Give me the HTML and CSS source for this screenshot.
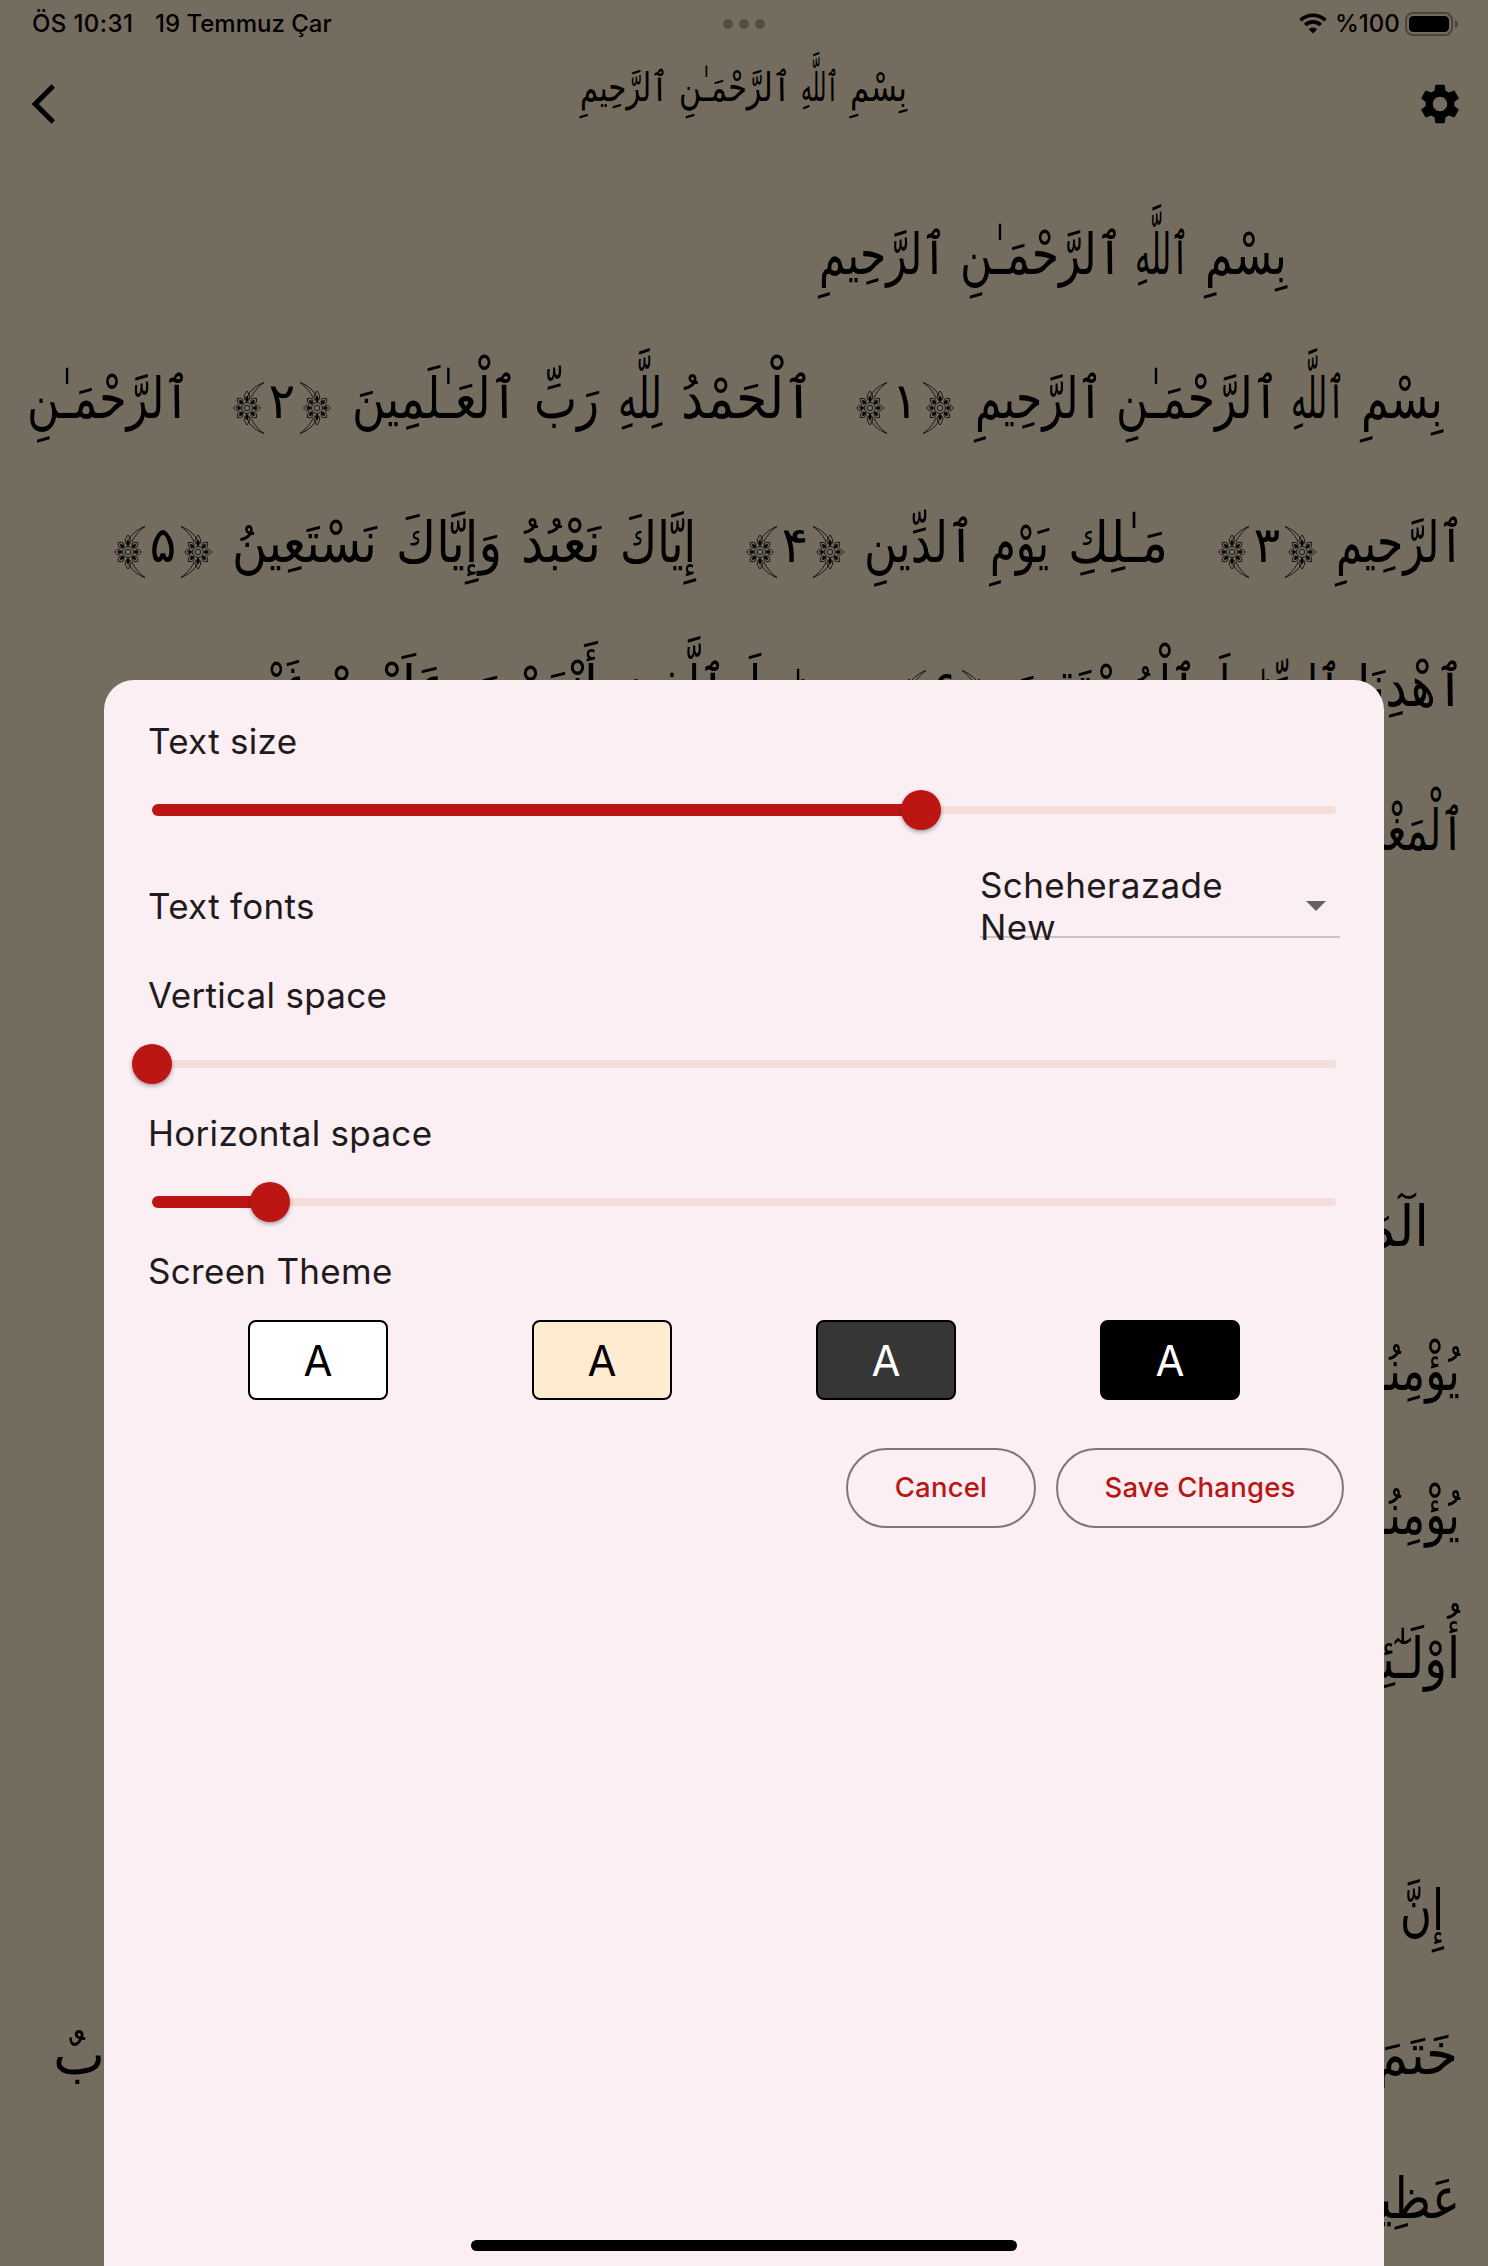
FILE: index.html
```html
<!DOCTYPE html>
<html lang="tr">
<head>
<meta charset="utf-8">
<title>Reader settings</title>
<link rel="stylesheet" href="styles.css">
</head>
<body>
<svg class="defs" width="0" height="0" aria-hidden="true">
  <defs>
    <g id="petal"><path d="M0-6.500 C-4-9.500-3.500-12 0-17 C3.500-12 4-9.500 0-6.500Z"/><path d="M0-6.500 C-1.800-8.500-1.500-10 0-12 C1.500-10 1.800-8.500 0-6.500Z" fill="#000"/></g>
    <g id="side-petal"><path d="M0-6.500 C-4-8.500-3.500-10.500 0-13.500 C3.500-10.500 4-8.500 0-6.500Z"/><path d="M0-6.500 C-1.600-8-1.400-9.500 0-10.500 C1.400-9.500 1.600-8 0-6.500Z" fill="#000"/></g>
    <g id="ornament" fill="none" stroke="#000" stroke-width=".8">
      <path d="M0 .4 C9 4 15 10 16 14 M0 .4 C7 6 11 11 13 16 M0 51.600 C9 48 15 42 16 38 M0 51.600 C7 46 11 41 13 36"/>
      <g transform="translate(17 26)">
        <use href="#petal"/><use href="#petal" transform="rotate(180)"/>
        <use href="#side-petal" transform="rotate(45)"/><use href="#side-petal" transform="rotate(90)"/><use href="#side-petal" transform="rotate(135)"/>
        <use href="#side-petal" transform="rotate(225)"/><use href="#side-petal" transform="rotate(270)"/><use href="#side-petal" transform="rotate(315)"/>
        <circle r="5.500"/><circle r="2.800"/>
      </g>
    </g>
    <g id="brackets"><use href="#ornament" x="67" y="64"/><use href="#ornament" transform="translate(31 64) scale(-1 1)"/></g>
  </defs>
</svg>
<div class="screen">
  <div class="status">
    <span class="time">ÖS 10:31</span><span class="date">19 Temmuz Çar</span>
    <svg class="dots" width="42" height="10"><circle cx="5" cy="5" r="5"/><circle cx="21" cy="5" r="5"/><circle cx="37" cy="5" r="5"/></svg>
    <svg class="wifi" width="28" height="21" viewBox="0 0 28 21"><g fill="none" stroke="#000" stroke-width="3.600"><path d="M1.500 7.300 A18 18 0 0 1 26.500 7.300"/><path d="M6.200 12 A11.300 11.300 0 0 1 21.800 12"/></g><path d="M14 20.500 L9.800 16.200 A6.200 6.200 0 0 1 18.200 16.200Z"/></svg>
    <span class="percent">%100</span>
    <svg class="battery" width="54" height="24" viewBox="0 0 54 24"><rect x="1" y="1" width="46" height="22" rx="7" fill="none" stroke="#4b453c" stroke-width="2"/><rect x="4" y="4" width="40" height="16" rx="4.500"/><path d="M50 8 Q53 9 53 12 Q53 15 50 16Z" fill="#4b453c"/></svg>
  </div>
  <header class="bar">
    <svg width="48" height="48" viewBox="0 0 24 24"><path d="M17.510 3.870 15.730 2.100 5.840 12l9.900 9.900 1.770-1.770L9.380 12z"/></svg>
    <div class="title">
      <svg width="57" height="64"><text y="44" textLength="57" lengthAdjust="spacingAndGlyphs">بِسْمِ</text></svg>
      <svg width="38" height="64"><text y="44" textLength="38" lengthAdjust="spacingAndGlyphs">ٱللَّهِ</text></svg>
      <svg width="111" height="64"><text y="44" textLength="111" lengthAdjust="spacingAndGlyphs">ٱلرَّحْمَـٰنِ</text></svg>
      <svg width="88" height="64"><text y="44" textLength="88" lengthAdjust="spacingAndGlyphs">ٱلرَّحِيمِ</text></svg>
    </div>
    <svg width="48" height="48" viewBox="0 0 24 24"><path d="M19.140 12.940c.04-.3.060-.61.060-.94 0-.32-.02-.64-.07-.94l2.030-1.580c.18-.14.230-.41.120-.61l-1.920-3.320c-.12-.22-.37-.29-.59-.22l-2.390.96c-.5-.38-1.030-.7-1.620-.94l-.36-2.540c-.04-.24-.24-.41-.48-.41h-3.840c-.24 0-.43.170-.47.410l-.36 2.540c-.59.240-1.130.570-1.620.940l-2.390-.96c-.22-.08-.47 0-.59.220L2.740 8.870c-.12.210-.08.470.120.610l2.030 1.580c-.05.3-.09.630-.09.940s.02.640.070.940l-2.030 1.580c-.18.140-.23.410-.12.610l1.920 3.320c.12.220.370.290.590.220l2.390-.96c.5.380 1.030.7 1.620.940l.36 2.540c.05.240.240.410.480.410h3.840c.24 0 .44-.17.470-.41l.36-2.540c.59-.24 1.130-.56 1.620-.94l2.390.96c.22.080.470 0 .59-.22l1.920-3.320c.12-.22.070-.47-.12-.61l-2.010-1.580zM12 15.600c-1.980 0-3.600-1.620-3.600-3.600s1.620-3.600 3.600-3.600 3.600 1.620 3.600 3.600-1.620 3.600-3.600 3.600z"/></svg>
  </header>
  <main class="reader">
    <div class="line opening">
      <div class="phrase tight">
        <svg width="82" height="144"><text y="100" textLength="82" lengthAdjust="spacingAndGlyphs">بِسْمِ</text></svg>
        <svg width="54" height="144"><text y="100" textLength="54" lengthAdjust="spacingAndGlyphs">ٱللَّهِ</text></svg>
        <svg width="159" height="144"><text y="100" textLength="162" lengthAdjust="spacingAndGlyphs">ٱلرَّحْمَـٰنِ</text></svg>
        <svg width="125" height="144"><text y="100" textLength="128" lengthAdjust="spacingAndGlyphs">ٱلرَّحِيمِ</text></svg>
      </div>
    </div>
    <div class="line first">
      <div class="phrase tight">
        <svg width="82" height="144"><text y="100" textLength="82" lengthAdjust="spacingAndGlyphs">بِسْمِ</text></svg>
        <svg width="54" height="144"><text y="100" textLength="54" lengthAdjust="spacingAndGlyphs">ٱللَّهِ</text></svg>
        <svg width="159" height="144"><text y="100" textLength="162" lengthAdjust="spacingAndGlyphs">ٱلرَّحْمَـٰنِ</text></svg>
        <svg width="125" height="144"><text y="100" textLength="128" lengthAdjust="spacingAndGlyphs">ٱلرَّحِيمِ</text></svg>
      </div>
      <svg class="verse" width="98" height="144"><use href="#brackets"/><text class="digit" x="49" y="100">۱</text></svg>
      <div class="phrase">
        <svg width="132" height="144"><text y="100" textLength="132" lengthAdjust="spacingAndGlyphs">ٱلْحَمْدُ</text></svg>
        <svg width="44" height="144"><text y="100" textLength="44" lengthAdjust="spacingAndGlyphs">لِلَّهِ</text></svg>
        <svg width="65" height="144"><text y="100" textLength="65" lengthAdjust="spacingAndGlyphs">رَبِّ</text></svg>
        <svg width="163" height="144"><text y="100" textLength="165" lengthAdjust="spacingAndGlyphs">ٱلْعَـٰلَمِينَ</text></svg>
      </div>
      <svg class="verse" width="98" height="144"><use href="#brackets"/><text class="digit" x="49" y="100">۲</text></svg>
      <svg width="163" height="144"><text y="100" textLength="163" lengthAdjust="spacingAndGlyphs">ٱلرَّحْمَـٰنِ</text></svg>
    </div>
    <div class="line wide">
      <svg width="128" height="144"><text y="100" textLength="128" lengthAdjust="spacingAndGlyphs">ٱلرَّحِيمِ</text></svg>
      <svg class="verse" width="98" height="144"><use href="#brackets"/><text class="digit" x="49" y="100">۳</text></svg>
      <div class="phrase">
        <svg width="100" height="144"><text y="100" textLength="100" lengthAdjust="spacingAndGlyphs">مَـٰلِكِ</text></svg>
        <svg width="59" height="144"><text y="100" textLength="59" lengthAdjust="spacingAndGlyphs">يَوْمِ</text></svg>
        <svg width="107" height="144"><text y="100" textLength="110" lengthAdjust="spacingAndGlyphs">ٱلدِّينِ</text></svg>
      </div>
      <svg class="verse" width="98" height="144"><use href="#brackets"/><text class="digit" x="49" y="100">۴</text></svg>
      <div class="phrase">
        <svg width="76" height="144"><text y="100" textLength="76" lengthAdjust="spacingAndGlyphs">إِيَّاكَ</text></svg>
        <svg width="80" height="144"><text y="100" textLength="80" lengthAdjust="spacingAndGlyphs">نَعْبُدُ</text></svg>
        <svg width="106" height="144"><text y="100" textLength="106" lengthAdjust="spacingAndGlyphs">وَإِيَّاكَ</text></svg>
        <svg width="145" height="144"><text y="100" textLength="145" lengthAdjust="spacingAndGlyphs">نَسْتَعِينُ</text></svg>
      </div>
      <svg class="verse" width="98" height="144"><use href="#brackets"/><text class="digit" x="49" y="100">۵</text></svg>
    </div>
    <div class="line wide">
      <div class="phrase">
        <svg width="107" height="144"><text y="100" textLength="107" lengthAdjust="spacingAndGlyphs">ٱهْدِنَا</text></svg>
        <svg width="125" height="144"><text y="100" textLength="128" lengthAdjust="spacingAndGlyphs">ٱلصِّرَٰطَ</text></svg>
        <svg width="181" height="144"><text y="100" textLength="184" lengthAdjust="spacingAndGlyphs">ٱلْمُسْتَقِيمَ</text></svg>
      </div>
      <svg class="verse" width="98" height="144"><use href="#brackets"/><text class="digit" x="49" y="100">۶</text></svg>
      <div class="phrase">
        <svg width="103" height="144"><text y="100" textLength="103" lengthAdjust="spacingAndGlyphs">صِرَٰطَ</text></svg>
        <svg width="106" height="144"><text y="100" textLength="109" lengthAdjust="spacingAndGlyphs">ٱلَّذِينَ</text></svg>
        <svg width="130" height="144"><text y="100" textLength="130" lengthAdjust="spacingAndGlyphs">أَنْعَمْتَ</text></svg>
        <svg width="124" height="144"><text y="100" textLength="124" lengthAdjust="spacingAndGlyphs">عَلَيْهِمْ</text></svg>
        <svg width="60" height="144"><text y="100" textLength="60" lengthAdjust="spacingAndGlyphs">غَيْرِ</text></svg>
      </div>
    </div>
    <div class="line wide">
      <svg width="168" height="144"><text y="100" textLength="168" lengthAdjust="spacingAndGlyphs">ٱلْمَغْضُوبِ</text></svg>
    </div>
    <div class="line surah letters">
      <svg width="66" height="144"><text y="100" textLength="66" lengthAdjust="spacingAndGlyphs">الٓمٓ</text></svg>
    </div>
    <div class="line">
      <svg width="126" height="144"><text y="100" textLength="126" lengthAdjust="spacingAndGlyphs">يُؤْمِنُونَ</text></svg>
    </div>
    <div class="line">
      <svg width="126" height="144"><text y="100" textLength="126" lengthAdjust="spacingAndGlyphs">يُؤْمِنُونَ</text></svg>
    </div>
    <div class="line">
      <svg width="118" height="144"><text y="100" textLength="118" lengthAdjust="spacingAndGlyphs">أُوْلَـٰٓئِكَ</text></svg>
    </div>
    <div class="line section">
      <svg width="44" height="144"><text y="100" textLength="44" lengthAdjust="spacingAndGlyphs">إِنَّ</text></svg>
    </div>
    <div class="line ends">
      <svg width="82" height="144"><text y="100" textLength="82" lengthAdjust="spacingAndGlyphs">خَتَمَ</text></svg>
      <svg width="52" height="144"><text y="100" textLength="52" lengthAdjust="spacingAndGlyphs">بٌ</text></svg>
    </div>
    <div class="line">
      <svg width="112" height="144"><text y="100" textLength="112" lengthAdjust="spacingAndGlyphs">عَظِيمٌ</text></svg>
    </div>
  </main>
  <section class="sheet">
    <div class="label">Text size</div>
    <div class="slider"><div class="fill" style="width:769px"></div><div class="thumb"></div><div class="track"></div></div>
    <div class="row">
      <div class="label">Text fonts</div>
      <div class="select"><span>Scheherazade New</span><svg width="20" height="10"><path d="M0 0H20L10 10Z" fill="#666063"/></svg></div>
    </div>
    <div class="label vertical">Vertical space</div>
    <div class="slider"><div class="fill" style="width:0px"></div><div class="thumb"></div><div class="track"></div></div>
    <div class="label horizontal">Horizontal space</div>
    <div class="slider"><div class="fill" style="width:118px"></div><div class="thumb"></div><div class="track"></div></div>
    <div class="label theme-label">Screen Theme</div>
    <div class="themes"><button class="white">A</button><button class="sepia">A</button><button class="gray">A</button><button class="black">A</button></div>
    <div class="actions"><button class="cancel">Cancel</button><button class="save">Save Changes</button></div>
  </section>
  <div class="home"></div>
</div>
</body>
</html>
```
FILE: styles.css
```css
* { box-sizing: border-box; }
body { margin: 0; font-family: Inter, "Liberation Sans", sans-serif; }
svg { display: block; flex: none; overflow: visible; }
.defs { position: absolute; }
button { font-family: inherit; padding: 0; }

.screen { position: relative; width: 1488px; height: 2266px; overflow: hidden; background: #746c5f; }

.status { display: flex; align-items: center; height: 47px; padding: 0 29px 0 32px; font-size: 24px; font-weight: 500; white-space: nowrap; }
.time { width: 123px; letter-spacing: .4px; }
.date { width: 568px; letter-spacing: 0; }
.dots { fill: #544a3e; }
.wifi { margin-left: auto; }
.percent { width: 65px; margin: 0 5px 0 8px; letter-spacing: 0; }

.bar { display: flex; justify-content: space-between; align-items: flex-start; height: 127px; padding: 33px 24px 0 20px; }
.title { display: flex; direction: rtl; gap: 11px; margin-top: -23px; margin-left: 3px; }
.title text, .line text { direction: ltr; font-family: "DejaVu Sans", sans-serif; font-size: 40px; }

.line { display: flex; direction: rtl; height: 144px; padding-right: 28px; }
.line text { font-size: 57px; }
.line .digit { font-size: 50px; text-anchor: middle; }
.opening { padding-right: 201px; }
.first { padding-right: 45px; }
.phrase { display: flex; gap: 19px; }
.tight { gap: 16px; }
.verse { margin: 0 21px 0 43px; }
.wide { padding-right: 24px; }
.wide .verse { margin: 0 20px 0 50px; }
.surah { margin-top: 252px; }
.letters { padding-right: 59px; }
.section { margin-top: 108px; padding-right: 44px; }
.ends { justify-content: space-between; padding-right: 30px; padding-left: 53px; }

.sheet { position: absolute; left: 104px; right: 104px; top: 680px; bottom: 0; padding: 40px 44px 0 44px; border-radius: 30px 30px 0 0; background: #fbeff3; color: #1f1b1c; }
.label { font-size: 35px; line-height: 42px; letter-spacing: .3px; }
.slider { display: flex; align-items: center; height: 96px; padding: 0 4px 0 4px; }
.fill { flex: none; height: 12px; border-radius: 6px 0 0 6px; background: #bb1614; }
.track { flex: 1; height: 8px; border-radius: 0 4px 4px 0; background: #f5ddd9; }
.thumb { flex: none; width: 40px; height: 40px; margin: 0 -20px; border-radius: 50%; background: #bb1614; box-shadow: 0 2px 4px rgba(0,0,0,.35); z-index: 1; }
.row { display: flex; align-items: center; justify-content: space-between; height: 96px; }
.select { display: flex; align-items: center; justify-content: space-between; width: 360px; height: 63px; padding: 2px 14px 0 0; border-bottom: 2px solid #cbc3c6; font-size: 35px; line-height: 42px; letter-spacing: .4px; }
.select span { width: 260px; }
.vertical { margin-top: 20px; }
.themes { display: flex; justify-content: space-between; margin: 28px 100px 0 100px; }
.themes button { width: 140px; height: 80px; border: 2px solid #000; border-radius: 8px; font-size: 42px; }
.white { background: #fff; color: #000; }
.sepia { background: #ffebd0; color: #000; }
.gray { background: #363636; color: #fff; }
.black { background: #000; color: #fff; }
.actions { display: flex; justify-content: flex-end; gap: 20px; margin-top: 48px; margin-right: -4px; }
.actions button { height: 80px; padding-bottom: 2px; border: 2px solid #85736f; border-radius: 40px; background: transparent; color: #bb1614; font-size: 27.5px; font-weight: 500; letter-spacing: .2px; }
.cancel { width: 190px; }
.save { width: 288px; }
.home { position: absolute; left: 471px; bottom: 15px; width: 546px; height: 11px; border-radius: 6px; background: #000; }
```
